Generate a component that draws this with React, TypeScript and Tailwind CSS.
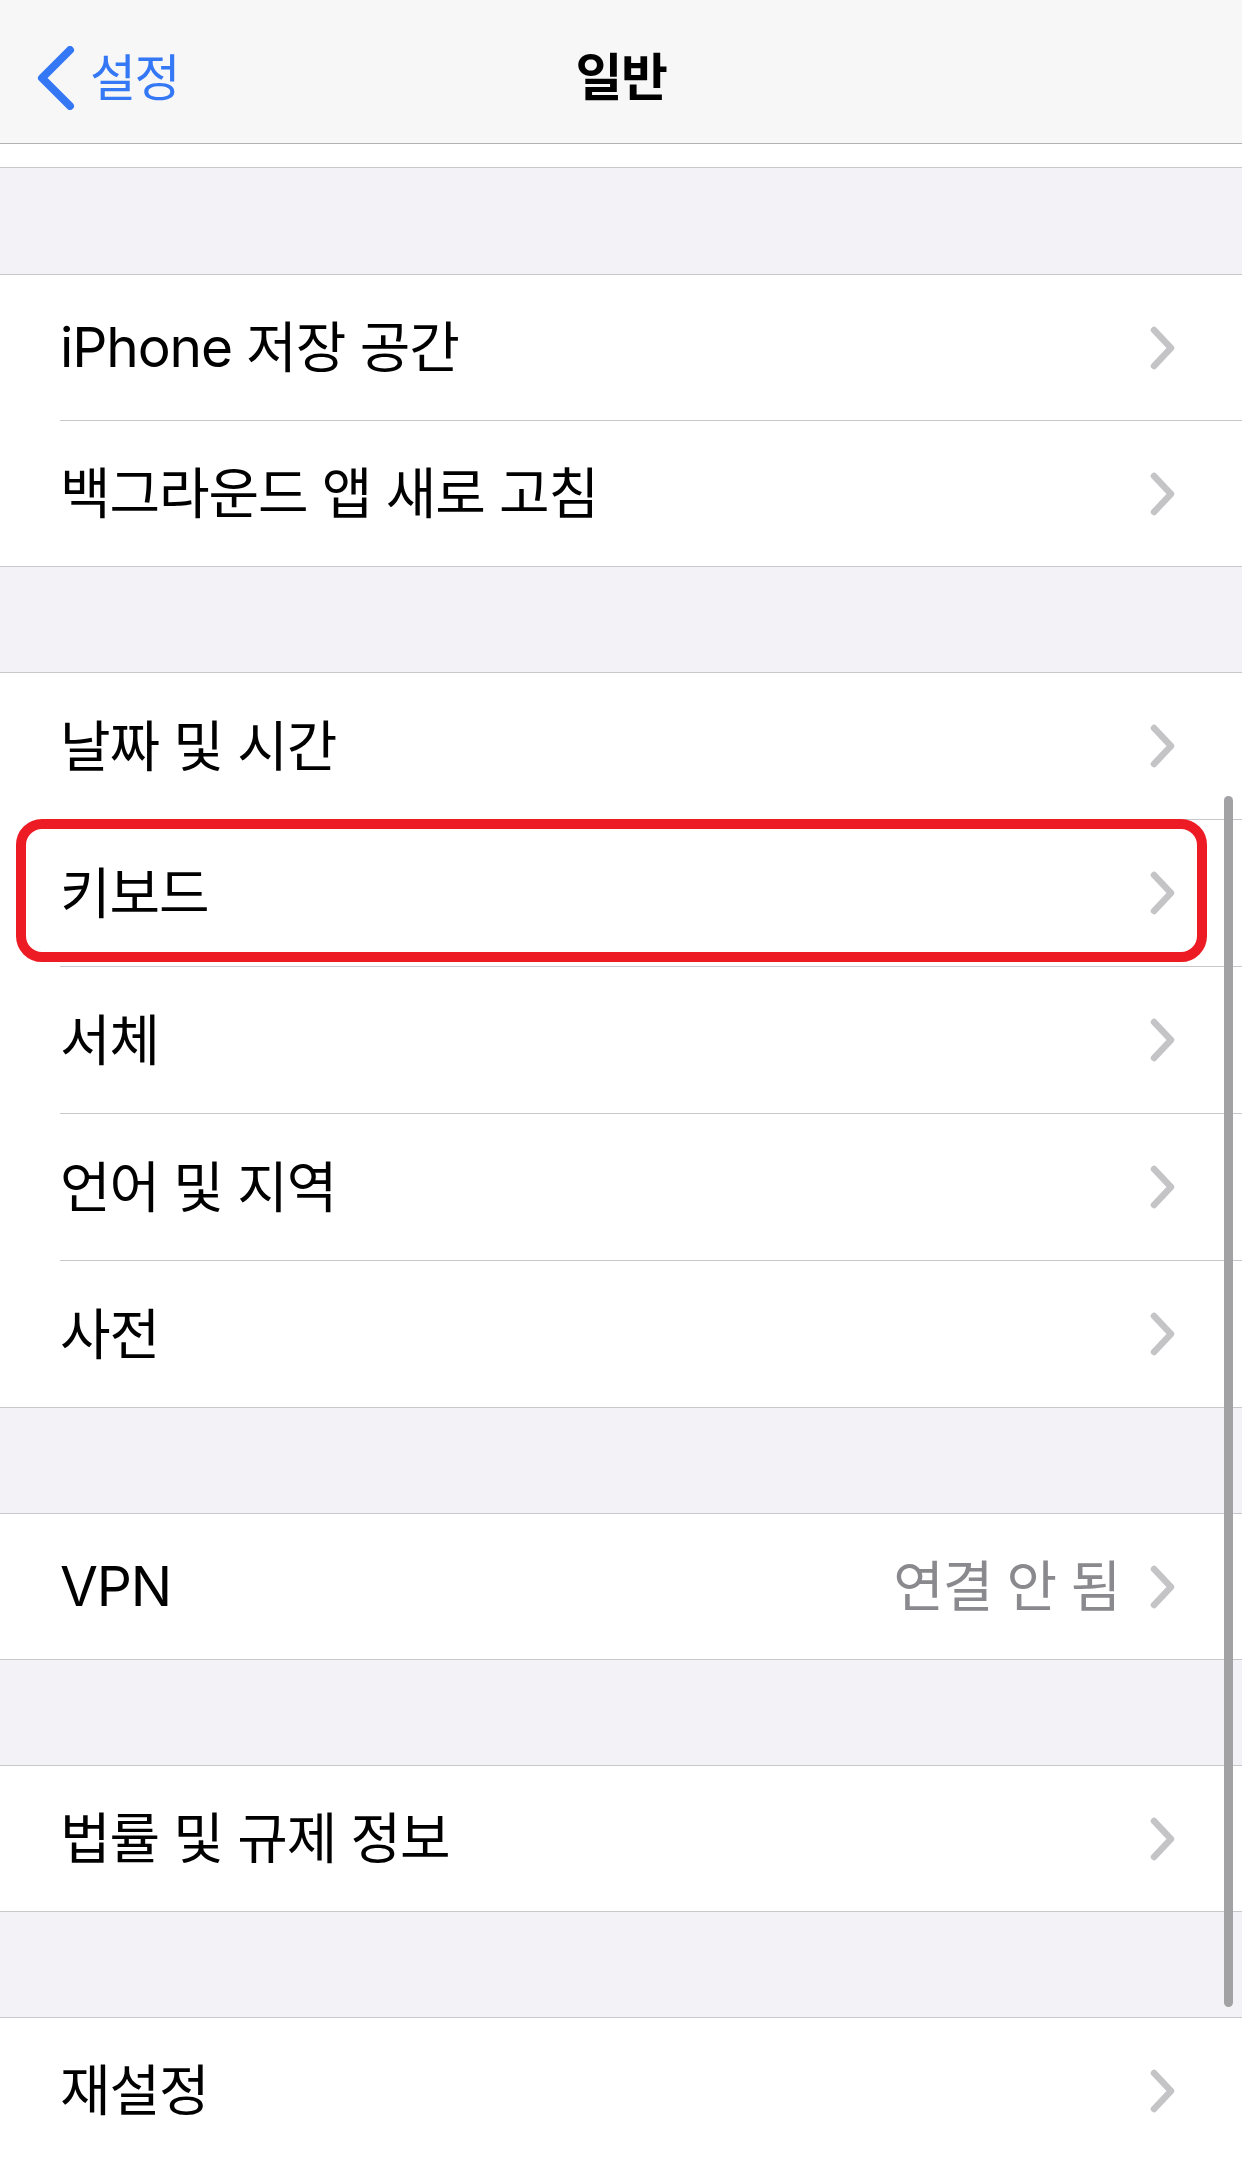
import React from "react";

const FONT = {
  fontFamily: 'Inter, "Noto Sans CJK KR", "Noto Sans", sans-serif',
};

function Chevron() {
  return (
    <svg width="26" height="44" viewBox="0 0 26 44" className="shrink-0">
      <polyline
        points="4,4 21,22 4,40"
        fill="none"
        stroke="#c4c4c7"
        strokeWidth="6.5"
        strokeLinecap="round"
        strokeLinejoin="round"
      />
    </svg>
  );
}

function Row({
  label,
  value,
  last,
  tall,
}: {
  label: string;
  value?: string;
  last?: boolean;
  tall?: boolean;
}) {
  return (
    <div className="bg-white">
      <div
        className={
          (tall ? "h-[146px]" : "h-[145px]") +
          " flex items-center pl-[60px] pr-[66px]"
        }
      >
        <span className="flex-1 text-[55px] text-black tracking-[-0.02em] leading-none">
          {label}
        </span>
        {value && (
          <span className="text-[55px] text-[#8a8a8e] tracking-[-0.02em] leading-none mr-[30px]">
            {value}
          </span>
        )}
        <Chevron />
      </div>
      {!last && <div className="ml-[60px] h-px bg-[#c8c7cc]" />}
    </div>
  );
}

function Group({ children }: { children: React.ReactNode }) {
  return <div className="border-y border-[#c8c7cc]">{children}</div>;
}

function Gap() {
  return <div className="h-[105px]" />;
}

export default function App() {
  return (
    <div
      className="w-[1242px] h-[2160px] overflow-hidden bg-[#f2f2f7] relative"
      style={FONT}
    >
      {/* Nav bar */}
      <div className="h-[144px] pt-[12px] bg-[#f7f7f7] border-b border-[#b2b2b4] grid grid-cols-[1fr_auto_1fr] items-center">
        <div className="flex items-center pl-[36px] gap-[14px]">
          <svg width="40" height="64" viewBox="0 0 40 64">
            <polyline
              points="34,4 6,32 34,60"
              fill="none"
              stroke="#3478f6"
              strokeWidth="8"
              strokeLinecap="round"
              strokeLinejoin="round"
            />
          </svg>
          <span className="text-[50px] text-[#3478f6] leading-none tracking-[-0.03em]">
            설정
          </span>
        </div>
        <div className="text-[51px] font-semibold text-black leading-none tracking-[-0.03em]">
          일반
        </div>
        <div />
      </div>
      {/* white strip */}
      <div className="h-[24px] bg-white border-b border-[#c8c7cc]" />
      <div className="h-[106px]" />
      <Group>
        <Row label="iPhone 저장 공간" />
        <Row label="백그라운드 앱 새로 고침" last />
      </Group>
      <Gap />
      <Group>
        <Row label="날짜 및 시간" tall />
        <div className="relative">
          <Row label="키보드" tall />
          <div className="absolute left-[16px] right-[35px] top-[-1px] h-[143px] border-[10px] border-[#ed1c24] rounded-[26px] pointer-events-none" />
        </div>
        <Row label="서체" tall />
        <Row label="언어 및 지역" tall />
        <Row label="사전" tall last />
      </Group>
      <Gap />
      <Group>
        <Row label="VPN" value="연결 안 됨" last />
      </Group>
      <Gap />
      <Group>
        <Row label="법률 및 규제 정보" last />
      </Group>
      <Gap />
      <Group>
        <Row label="재설정" last />
      </Group>

      {/* scroll indicator */}
      <div className="absolute left-[1224px] top-[796px] w-[9px] h-[1211px] rounded-full bg-[#a2a2a4]" />
    </div>
  );
}
